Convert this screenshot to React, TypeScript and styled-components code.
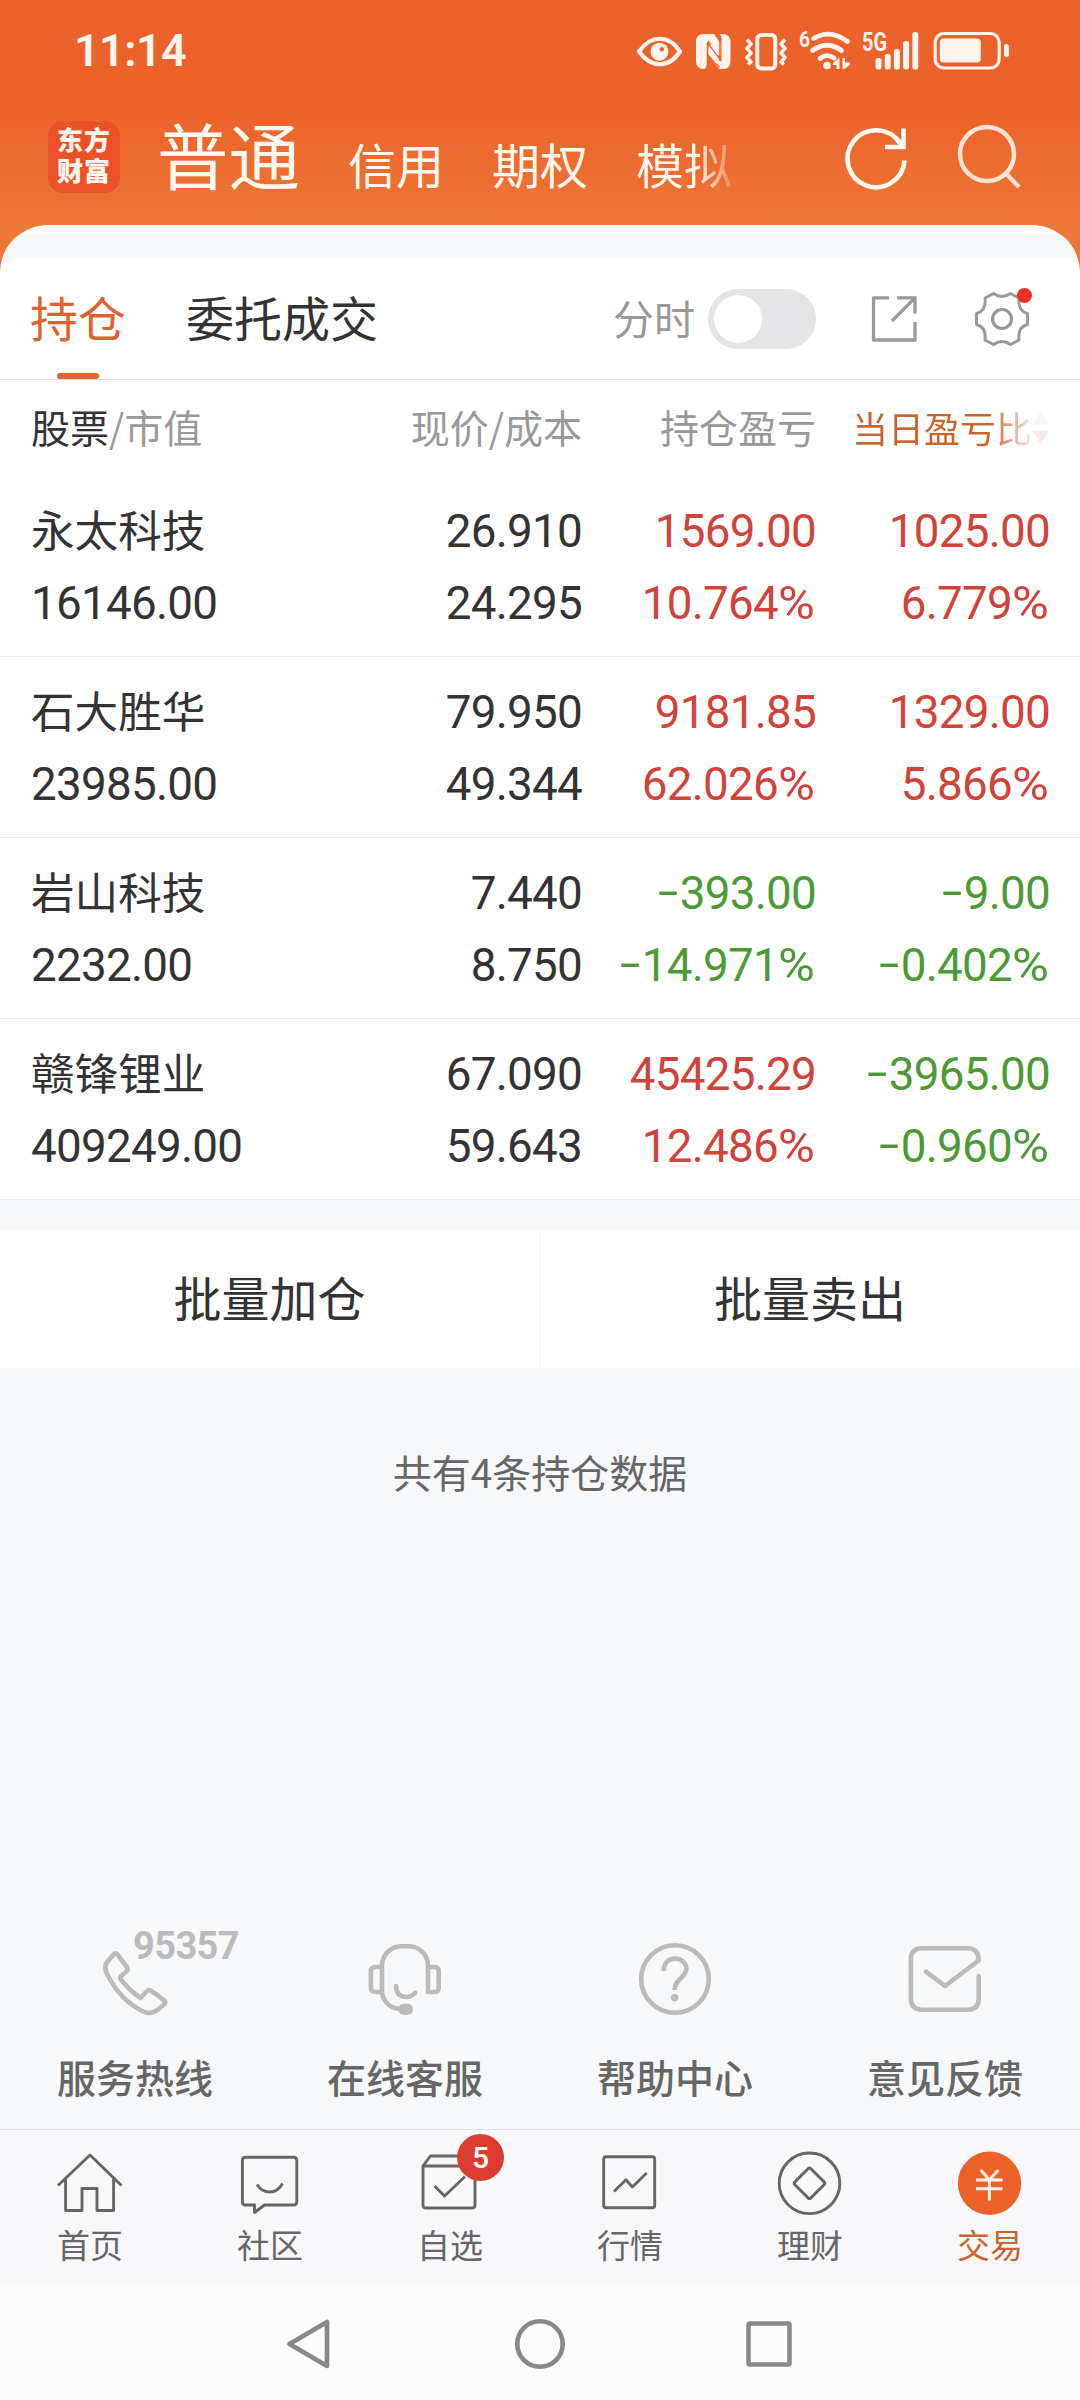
import React from "react";
import styled, { createGlobalStyle } from "styled-components";

const Global = createGlobalStyle`
  * { box-sizing: border-box; }
  body {
    margin: 0;
    background: #f7f8fa;
    font-family: "Noto Sans CJK SC", "Noto Sans", sans-serif;
    color: #333;
  }
  svg { display: block; overflow: visible; flex: none; }
`;

const Screen = styled.div`
  width: 1080px;
  height: 2400px;
  display: flex;
  flex-direction: column;
  overflow: hidden;
  background: #f7f8fa;
`;

const Top = styled.header`
  height: 285px;
  margin-bottom: -60px;
  flex: none;
  background: linear-gradient(#ec622b 0, #ec622b 108px, #ed7736 225px, #ee7a38 285px);
`;

const StatusBar = styled.div`
  height: 102px;
  padding: 0 70px 0 74px;
  display: flex;
  align-items: center;
  justify-content: space-between;
  color: #fff4ee;
`;

const Clock = styled.div`
  font-family: Roboto, sans-serif;
  font-size: 45px;
  line-height: 60px;
  font-weight: 600;
  letter-spacing: -0.6px;
`;

const StatusIcons = styled.div`
  display: flex;
  gap: 13px;
`;

const NavRow = styled.div`
  height: 123px;
  padding-left: 48px;
  display: flex;
  align-items: flex-start;
`;

const Logo = styled.div`
  width: 72px;
  height: 72px;
  margin-top: 19px;
  padding: 2px 0 0 9px;
  border-radius: 15px;
  background: #eb5229;
  color: #fff8f0;
  font-size: 26px;
  line-height: 31px;
  letter-spacing: 1px;
  font-weight: 900;
  white-space: pre;
`;

const Accounts = styled.nav`
  width: 586px;
  margin-left: 37px;
  display: flex;
  align-items: baseline;
  gap: 48px;
  color: #fff9f0;
  white-space: nowrap;
`;

const Account = styled.span<{ $active?: boolean; $faded?: boolean }>`
  font-size: ${(p) => (p.$active ? 71.5 : 48)}px;
  line-height: 102px;
  ${(p) =>
    p.$faded &&
    `background: linear-gradient(90deg, #fff9f0 60%, rgba(255, 249, 240, 0.25) 98%);
     background-clip: text; color: transparent;`}
`;

const HeadActions = styled.div`
  display: flex;
  gap: 47px;
  margin-top: 22px;
  margin-left: 103px;
`;

const Sheet = styled.section`
  flex: none;
  border-radius: 48px 48px 0 0;
  background: #fff;
  padding-top: 10px;
  overflow: hidden;
`;

const Strip = styled.div<{ $h: number }>`
  flex: none;
  height: ${(p) => p.$h}px;
  background: #f7f8fa;
`;

const TabRow = styled.div`
  height: 122px;
  padding: 0 51px 0 30px;
  display: flex;
  align-items: center;
  border-bottom: 1px solid #dedede;
`;

const Tab = styled.div<{ $active?: boolean }>`
  height: 121px;
  margin-right: 60px;
  display: flex;
  flex-direction: column;
  align-items: center;
  font-size: 48px;
  line-height: 117px;
  color: ${(p) => (p.$active ? "#dc6330" : "#333")};
  &::after {
    content: "";
    width: 42px;
    height: 6px;
    margin-top: -2px;
    border-radius: 3px;
    background: ${(p) => (p.$active ? "#dc6330" : "transparent")};
  }
`;

const Tools = styled.div`
  margin-left: auto;
  display: flex;
  align-items: center;
  color: #999;
  font-size: 41px;
`;

const ToolLabel = styled.span`
  line-height: 56px;
  margin-bottom: 3px;
`;

const Switch = styled.div`
  width: 108px;
  height: 60px;
  margin: 0 55px 0 13px;
  padding: 6px;
  border-radius: 30px;
  background: #e4e4e6;
  &::after {
    content: "";
    display: block;
    width: 48px;
    height: 48px;
    border-radius: 50%;
    background: #fff;
  }
`;

const Gear = styled.div`
  position: relative;
  margin-left: 57px;
  &::after {
    content: "";
    position: absolute;
    top: -4px;
    right: -3px;
    width: 15px;
    height: 15px;
    border-radius: 50%;
    background: #e93223;
  }
`;

const columns = "300px 251px 234px 234px";

const ListHead = styled.div`
  height: 96px;
  padding: 0 30px 0 31px;
  display: grid;
  grid-template-columns: ${columns};
  align-items: start;
  font-size: 39px;
  line-height: 93px;
  color: #999;
`;

const HeadCell = styled.div`
  text-align: right;
  white-space: nowrap;
  &:first-child { text-align: left; }
  b { font-weight: 400; color: #333; }
`;

const SortCell = styled.div`
  padding-right: 1px;
  display: flex;
  justify-content: flex-end;
  align-items: center;
  gap: 1px;
  font-size: 36px;
  line-height: 95px;
  white-space: nowrap;
  span {
    background: linear-gradient(90deg, #c8652f 0, #c8652f 76%, #f6dccd 98%);
    background-clip: text;
    color: transparent;
  }
`;

const Holding = styled.div`
  height: 181px;
  padding: 16px 30px 0 31px;
  display: grid;
  grid-template-columns: ${columns};
  grid-template-rows: 72px 72px;
  border-bottom: 1px solid #ececec;
`;

const tones = { up: "#d0433b", down: "#4c9a35", plain: "#333" };
type Tone = keyof typeof tones;

const Value = styled.div<{ $tone: Tone; $left?: boolean }>`
  display: flex;
  justify-content: ${(p) => (p.$left ? "flex-start" : "flex-end")};
  font-family: Roboto, sans-serif;
  font-size: 45.8px;
  letter-spacing: -0.75px;
  line-height: 79px;
  white-space: nowrap;
  color: ${(p) => tones[p.$tone]};
`;

const StockName = styled.div`
  font-size: 43.6px;
  line-height: 72px;
`;

const Minus = styled.span`
  width: 23px;
  text-align: center;
  transform: translate(-1px, -2px) scaleX(1.6);
`;

const Percent = styled.span`
  width: 38px;
  transform: scaleX(1.1);
  transform-origin: left;
`;

const BatchRow = styled.div`
  flex: none;
  height: 138px;
  display: grid;
  grid-template-columns: 1fr 1fr;
  background: #fff;
`;

const BatchButton = styled.button`
  border: 0;
  border-right: 1px solid #f2f2f4;
  background: none;
  padding: 0 0 6px;
  font: 400 48px "Noto Sans CJK SC", sans-serif;
  color: #333;
  &:last-child { border-right: 0; }
`;

const Summary = styled.div`
  flex: 1;
  padding-top: 70px;
  text-align: center;
  font-size: 39px;
  line-height: 66px;
  color: #666;
`;

const Services = styled.div`
  flex: none;
  height: 189px;
  display: grid;
  grid-template-columns: repeat(4, 1fr);
`;

const Service = styled.div`
  position: relative;
  display: flex;
  flex-direction: column;
  align-items: center;
  color: #bbb;
`;

const ServiceLabel = styled.div`
  margin-top: 27px;
  font-size: 39px;
  line-height: 58px;
  font-weight: 500;
  color: #666;
`;

const Hotline = styled.div`
  position: absolute;
  left: 133px;
  top: -16px;
  font: 700 38px/44px Roboto, sans-serif;
  letter-spacing: -0.6px;
`;

const TabBar = styled.nav`
  flex: none;
  height: 158px;
  border-top: 1px solid #dfe1e4;
  padding-top: 21px;
  display: grid;
  grid-template-columns: repeat(6, 1fr);
  background: #f8f8fa;
`;

const BarItem = styled.div<{ $active?: boolean }>`
  position: relative;
  display: flex;
  flex-direction: column;
  align-items: center;
  font-size: 33px;
  line-height: 48px;
  gap: 5px;
  color: ${(p) => (p.$active ? "#c8652f" : "#666")};
`;

const Badge = styled.span`
  position: absolute;
  left: 97px;
  top: -17px;
  width: 47px;
  height: 47px;
  border-radius: 50%;
  background: #dd3c33;
  color: #fff;
  text-align: center;
  font: 500 30px/48px Roboto, sans-serif;
`;

const SystemNav = styled.div`
  flex: none;
  height: 113px;
  display: flex;
  justify-content: center;
  align-items: center;
  gap: 180px;
  background: #fcfcfc;
`;

const line = (w: number, color = "currentColor") => ({
  fill: "none",
  stroke: color,
  strokeWidth: w,
  strokeLinejoin: "round" as const,
});

const StatusGlyphs = () => (
  <StatusIcons>
    <svg width="46" height="42">
      <path d="M2 21.5C14 4.500 32 4.500 43 21.500C32 38.500 14 38.500 2 21.500Z" {...line(4.200)} />
      <circle cx="22.500" cy="21.700" r="9" fill="currentColor" />
      <circle cx="24.800" cy="19.200" r="2.200" fill="#ec622b" />
    </svg>
    <svg width="35" height="42">
      <path d="M8 4H18L25 14V27L22.500 23.500L12 10V37L10.500 39H8Q0 39 0 31V12Q0 4 8 4Z" fill="currentColor" />
      <path d="M27 4Q34.500 4.500 34.500 12V31Q34.500 39 27 39H23L12.500 25V15L25.500 32V8Q25.500 5 23 4Z" fill="currentColor" />
      <path d="M9 39.500Q11.500 38 11.500 34V13M11.500 24L23.500 37.500M11.500 12L24 29M24 31V9Q24 5 21.500 3.500" fill="none" stroke="#ec622b" strokeWidth="1.600" />
      <path d="M14.800 14.500L22.500 25M13.500 18V24L21 33" fill="none" stroke="currentColor" strokeWidth="2" />
    </svg>
    <svg width="42" height="42">
      <rect x="13.300" y="5" width="18" height="33.500" rx="4" {...line(4)} />
      <path d="M3 9.500L7 14L3 18.500L7 23L3 27.500L7 32L4 34.500M41 9.500L37 14L41 18.500L37 23L41 27.500L37 32L40 34.500" {...line(3.500)} />
    </svg>
    <svg width="50" height="42">
      <text x="0" y="16.500" fontFamily="Roboto" fontWeight="700" fontSize="22" textLength="11" lengthAdjust="spacingAndGlyphs" fill="currentColor">6</text>
      <path d="M14.500 8.500Q31 -1.500 48.500 11.500M13.500 20.500Q28 10 42.500 20.500M21 28.500Q28 23 35 28" {...line(4.800)} strokeLinecap="round" />
      <circle cx="28" cy="35.500" r="3.800" fill="currentColor" />
      <path d="M40.500 28V39H37.500V35H34V33L40 28ZM43.500 28H46V32.500H51V34.500L45.500 39H43.500Z" fill="currentColor" />
    </svg>
    <svg width="58" height="42">
      <text x="0" y="20.500" fontFamily="Roboto" fontWeight="700" fontSize="25" textLength="25" lengthAdjust="spacingAndGlyphs" fill="currentColor">5G</text>
      {[28, 24, 19, 11, 2].map((y, i) => (
        <rect key={y} x={13.500 + i * 9.200} y={y} width="6" height={39.500 - y} rx="2.500" fill="currentColor" />
      ))}
    </svg>
    <svg width="77" height="42">
      <rect x="2.200" y="3.500" width="64" height="34.500" rx="9" {...line(3.200)} />
      <rect x="6.800" y="8.500" width="41" height="24" rx="4" fill="currentColor" />
      <rect x="71" y="14" width="5" height="13" rx="2.500" fill="currentColor" />
    </svg>
  </StatusIcons>
);

const RefreshIcon = () => (
  <svg width="64" height="68">
    <path d="M58.500 36.500A28.500 28.500 0 1 1 53.500 18.500" {...line(4.600, "#fff9f0")} />
    <path d="M57.500 4.500V23H39" {...line(4.600, "#fff9f0")} strokeLinejoin="miter" />
    <path d="M57 22L50 14" {...line(4.600, "#fff9f0")} />
  </svg>
);

const SearchIcon = () => (
  <svg width="66" height="68">
    <circle cx="30" cy="30" r="27" {...line(4.500, "#fde3d2")} />
    <path d="M48.500 49L62 63" {...line(4.500, "#fde3d2")} />
  </svg>
);

const ShareIcon = () => (
  <svg width="47" height="46">
    <path d="M18 1.800H2.500V44H44V26" {...line(3.300)} />
    <path d="M26 1.800H44V17.500M44 1.800L21 25" {...line(3.300)} strokeLinejoin="miter" />
  </svg>
);

const GearIcon = () => (
  <svg width="54" height="54">
    <path d="M18.500 1.500Q27 7.500 35.500 1.500L44 6Q42.500 19 52.500 21.500V32.500Q42.500 35 44 48L35.500 52.500Q27 46.500 18.500 52.500L10 48Q11.500 35 1.500 32.500V21.500Q11.500 19 10 6Z" {...line(3)} />
    <circle cx="27" cy="27" r="9.500" {...line(3.200)} />
  </svg>
);

const SortIcon = () => (
  <svg width="16" height="36">
    <path d="M8 0L16 14.500H0Z" fill="#f8f8f8" />
    <path d="M0 21H16L8 35Z" fill="#fbeae1" />
  </svg>
);

const services = [
  {
    label: "服务热线",
    extra: "95357",
    art: <path d="M18.500 14.500Q20.500 12 22.500 14.500L32 27Q33.500 29.500 31.500 31.500L26 36Q24.500 37.700 26 39.500Q34 50 45.500 58L52 51Q53.800 49.500 55.800 50.800Q63 55 69.500 60.800Q71 62.500 69.500 64.200L63 69.500Q56 75 48 71.500Q25 60 12 34Q8.500 26 12.500 21.500Z" />,
  },
  {
    label: "在线客服",
    art: (
      <>
        <path d="M17 52V25.500A19.500 19.200 0 0 1 36 6.300H44A19.500 19.200 0 0 1 63 25.500V52H69.500Q73.700 52 73.700 47.500V31.500Q73.700 27 69.500 27H63M17 27H10.500Q5.900 27 5.900 31.500V47Q5.900 52 10.500 52H17C18 62 26 68.700 34.500 68.700" />
        <path d="M31 46Q31.500 57 41.500 57Q46.500 57 50.300 52.800" strokeLinecap="round" />
        <rect x="33.400" y="63.700" width="14.500" height="11" rx="5" fill="currentColor" stroke="none" />
      </>
    ),
  },
  {
    label: "帮助中心",
    art: (
      <>
        <circle cx="40" cy="39" r="33.800" />
        <path d="M28.800 31C28.800 22.500 34 18.600 40 18.600C46.500 18.600 51.300 23 51.300 28.800C51.300 38 39.600 38.500 39.600 50" />
        <circle cx="39.600" cy="57.700" r="3.800" fill="currentColor" stroke="none" />
      </>
    ),
  },
  {
    label: "意见反馈",
    art: <path d="M73.700 36V58.500Q73.700 69.700 62.500 69.700H17Q5.900 69.700 5.900 58.500V19.500Q5.900 8.300 17 8.300H62.500Q73.700 8.300 73.700 20.500L40 46L21 31.700" strokeLinecap="round" />,
  },
];

const barItems = [
  {
    label: "首页",
    art: <path d="M0 34.500L32 4L63.500 34.500M7.600 28V59.500H24V37.500H39V59.500H55.600V28" />,
  },
  {
    label: "社区",
    art: (
      <>
        <path d="M7.500 6.300H55.500Q58.800 6.300 58.800 9.500V51Q58.800 54 55.500 54H26.500L16.500 61.500V54H7.500Q4.400 54 4.400 51V9.500Q4.400 6.300 7.500 6.300Z" />
        <path d="M19 33.500Q23.500 41 31.700 41Q40 41 44.500 32.500" />
      </>
    ),
  },
  {
    label: "自选",
    badge: "5",
    art: (
      <>
        <path d="M5 15L12.400 5H49.600L57 15V54Q57 57 54 57H8Q5 57 5 54ZM5 15H57" />
        <path d="M16.600 35L26.600 45L47 25.500" />
      </>
    ),
  },
  {
    label: "行情",
    art: (
      <>
        <rect x="5.700" y="5.700" width="51" height="51" rx="2.500" />
        <path d="M16 40.500L28 28.700L34.300 36L48.700 22" />
      </>
    ),
  },
  {
    label: "理财",
    art: (
      <>
        <circle cx="31.500" cy="32.300" r="30.300" />
        <rect x="20.200" y="21" width="22.600" height="22.600" rx="2" transform="rotate(45 31.500 32.300)" />
      </>
    ),
  },
  {
    label: "交易",
    active: true,
    art: (
      <>
        <circle cx="31.500" cy="32.300" r="31.700" fill="#ec6229" stroke="none" />
        <path d="M22.800 19L31.400 29L40.300 19M18 29H44.500M18 37.800H44.500M31.400 29V49.500" stroke="#fff3ea" strokeWidth="3" />
      </>
    ),
  },
];

type Row = { name: string; worth: string; price: string; cost: string; total: [string, string]; day: [string, string] };

const holdings: Row[] = [
  { name: "永太科技", worth: "16146.00", price: "26.910", cost: "24.295", total: ["1569.00", "10.764%"], day: ["1025.00", "6.779%"] },
  { name: "石大胜华", worth: "23985.00", price: "79.950", cost: "49.344", total: ["9181.85", "62.026%"], day: ["1329.00", "5.866%"] },
  { name: "岩山科技", worth: "2232.00", price: "7.440", cost: "8.750", total: ["-393.00", "-14.971%"], day: ["-9.00", "-0.402%"] },
  { name: "赣锋锂业", worth: "409249.00", price: "67.090", cost: "59.643", total: ["45425.29", "12.486%"], day: ["-3965.00", "-0.960%"] },
];

const Change = ({ text }: { text: string }) => {
  const negative = text.startsWith("-");
  return (
    <Value $tone={negative ? "down" : "up"}>
      {negative && <Minus>-</Minus>}
      {text.replace(/[-%]/g, "")}
      {text.endsWith("%") && <Percent>%</Percent>}
    </Value>
  );
};

export default function App() {
  return (
    <Screen>
      <Global />
      <Top>
        <StatusBar>
          <Clock>11:14</Clock>
          <StatusGlyphs />
        </StatusBar>
        <NavRow>
          <Logo>{"东方\n财富"}</Logo>
          <Accounts>
            <Account $active>普通</Account>
            <Account>信用</Account>
            <Account>期权</Account>
            <Account $faded>模拟</Account>
          </Accounts>
          <HeadActions>
            <RefreshIcon />
            <SearchIcon />
          </HeadActions>
        </NavRow>
      </Top>

      <Sheet>
        <Strip $h={23} />
        <TabRow>
          <Tab $active>持仓</Tab>
          <Tab>委托成交</Tab>
          <Tools>
            <ToolLabel>分时</ToolLabel>
            <Switch />
            <ShareIcon />
            <Gear>
              <GearIcon />
            </Gear>
          </Tools>
        </TabRow>
        <ListHead>
          <HeadCell>
            <b>股票</b>/市值
          </HeadCell>
          <HeadCell>现价/成本</HeadCell>
          <HeadCell>持仓盈亏</HeadCell>
          <SortCell>
            <span>当日盈亏比</span>
            <SortIcon />
          </SortCell>
        </ListHead>
        {holdings.map((h) => (
          <Holding key={h.name}>
            <StockName>{h.name}</StockName>
            <Value $tone="plain">{h.price}</Value>
            <Change text={h.total[0]} />
            <Change text={h.day[0]} />
            <Value $tone="plain" $left>{h.worth}</Value>
            <Value $tone="plain">{h.cost}</Value>
            <Change text={h.total[1]} />
            <Change text={h.day[1]} />
          </Holding>
        ))}
      </Sheet>
      <Strip $h={30} />
      <BatchRow>
        <BatchButton>批量加仓</BatchButton>
        <BatchButton>批量卖出</BatchButton>
      </BatchRow>
      <Summary>共有4条持仓数据</Summary>

      <Services>
        {services.map((s) => (
          <Service key={s.label}>
            <svg width="80" height="80" {...line(4.600)}>{s.art}</svg>
            {s.extra && <Hotline>{s.extra}</Hotline>}
            <ServiceLabel>{s.label}</ServiceLabel>
          </Service>
        ))}
      </Services>

      <TabBar>
        {barItems.map((b) => (
          <BarItem key={b.label} $active={b.active}>
            <svg width="64" height="64" {...line(2.900)}>{b.art}</svg>
            {b.badge && <Badge>{b.badge}</Badge>}
            {b.label}
          </BarItem>
        ))}
      </TabBar>

      <SystemNav>
        <svg width="50" height="50"><path d="M4.500 25L42 3V47Z" {...line(4.600, "#888")} /></svg>
        <svg width="50" height="50"><circle cx="25" cy="25" r="22.700" {...line(4.600, "#888")} /></svg>
        <svg width="50" height="50"><rect x="3.500" y="4.500" width="41" height="41" rx="1.500" {...line(4.600, "#888")} /></svg>
      </SystemNav>
    </Screen>
  );
}
